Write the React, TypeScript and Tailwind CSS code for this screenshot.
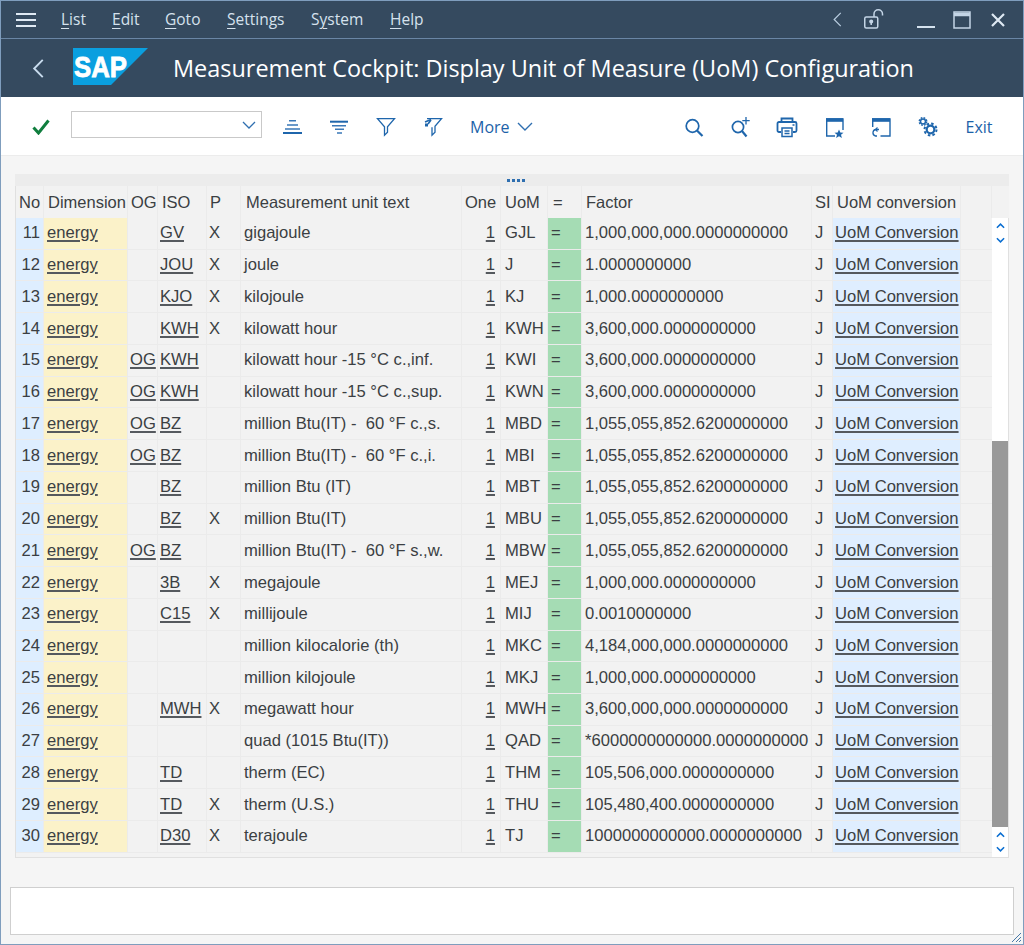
import React from "react";

const rows = [
  { no: 11, og: "", iso: "GV", p: "X", text: "gigajoule", uom: "GJL", factor: "1,000,000,000.0000000000" },
  { no: 12, og: "", iso: "JOU", p: "X", text: "joule", uom: "J", factor: "1.0000000000" },
  { no: 13, og: "", iso: "KJO", p: "X", text: "kilojoule", uom: "KJ", factor: "1,000.0000000000" },
  { no: 14, og: "", iso: "KWH", p: "X", text: "kilowatt hour", uom: "KWH", factor: "3,600,000.0000000000" },
  { no: 15, og: "OG", iso: "KWH", p: "", text: "kilowatt hour -15 °C c.,inf.", uom: "KWI", factor: "3,600,000.0000000000" },
  { no: 16, og: "OG", iso: "KWH", p: "", text: "kilowatt hour -15 °C c.,sup.", uom: "KWN", factor: "3,600,000.0000000000" },
  { no: 17, og: "OG", iso: "BZ", p: "", text: "million Btu(IT) -  60 °F c.,s.", uom: "MBD", factor: "1,055,055,852.6200000000" },
  { no: 18, og: "OG", iso: "BZ", p: "", text: "million Btu(IT) -  60 °F c.,i.", uom: "MBI", factor: "1,055,055,852.6200000000" },
  { no: 19, og: "", iso: "BZ", p: "", text: "million Btu (IT)", uom: "MBT", factor: "1,055,055,852.6200000000" },
  { no: 20, og: "", iso: "BZ", p: "X", text: "million Btu(IT)", uom: "MBU", factor: "1,055,055,852.6200000000" },
  { no: 21, og: "OG", iso: "BZ", p: "", text: "million Btu(IT) -  60 °F s.,w.", uom: "MBW", factor: "1,055,055,852.6200000000" },
  { no: 22, og: "", iso: "3B", p: "X", text: "megajoule", uom: "MEJ", factor: "1,000,000.0000000000" },
  { no: 23, og: "", iso: "C15", p: "X", text: "millijoule", uom: "MIJ", factor: "0.0010000000" },
  { no: 24, og: "", iso: "", p: "", text: "million kilocalorie (th)", uom: "MKC", factor: "4,184,000,000.0000000000" },
  { no: 25, og: "", iso: "", p: "", text: "million kilojoule", uom: "MKJ", factor: "1,000,000.0000000000" },
  { no: 26, og: "", iso: "MWH", p: "X", text: "megawatt hour", uom: "MWH", factor: "3,600,000,000.0000000000" },
  { no: 27, og: "", iso: "", p: "", text: "quad (1015 Btu(IT))", uom: "QAD", factor: "*6000000000000.0000000000" },
  { no: 28, og: "", iso: "TD", p: "", text: "therm (EC)", uom: "THM", factor: "105,506,000.0000000000" },
  { no: 29, og: "", iso: "TD", p: "X", text: "therm (U.S.)", uom: "THU", factor: "105,480,400.0000000000" },
  { no: 30, og: "", iso: "D30", p: "X", text: "terajoule", uom: "TJ", factor: "1000000000000.0000000000" },
];

const headers = [
  { label: "No", cls: "pl-[3px]" },
  { label: "Dimension", cls: "pl-[4px]" },
  { label: "OG", cls: "pl-[3px]" },
  { label: "ISO", cls: "pl-[4px]" },
  { label: "P", cls: "pl-[3px]" },
  { label: "Measurement unit text", cls: "pl-[5px]" },
  { label: "One", cls: "pl-[3px]" },
  { label: "UoM", cls: "pl-[4px]" },
  { label: "=", cls: "pl-[5px]" },
  { label: "Factor", cls: "pl-[4px]" },
  { label: "SI", cls: "pl-[3px]" },
  { label: "UoM conversion", cls: "pl-[4px]" },
  { label: "", cls: "" },
];

const colsClass = "grid grid-cols-[28px_84px_30px_49px_34px_221px_39px_47px_34px_230px_21px_128px_31px]";
const cell = "flex items-center overflow-hidden whitespace-nowrap border-r border-[#ebebeb]";
const rowCell = cell + " pt-[1px]";
const link = "underline decoration-[#55595e] decoration-[1.5px] underline-offset-[2px]";

function Icon({ children }: { children: React.ReactNode }) {
  return (
    <svg viewBox="0 0 22 22" fill="none" stroke="#1f66ac" strokeWidth="1.5" className="h-[22px] w-[22px] shrink-0">
      {children}
    </svg>
  );
}

function MenuItem({ before = "", mark, after }: { before?: string; mark: string; after: string }) {
  return (
    <span>
      {before}
      <span className="underline decoration-[1px] underline-offset-[3px]">{mark}</span>
      {after}
    </span>
  );
}

function ScrollButtons() {
  return (
    <div className="flex h-[30px] shrink-0 flex-col items-center justify-center gap-[8px] bg-white">
      <svg viewBox="0 0 10 6" className="h-[6px] w-[9px]" fill="none" stroke="#0a6ed1" strokeWidth="1.7">
        <path d="M1 5l4-4 4 4" />
      </svg>
      <svg viewBox="0 0 10 6" className="h-[6px] w-[9px]" fill="none" stroke="#0a6ed1" strokeWidth="1.7">
        <path d="M1 1l4 4 4-4" />
      </svg>
    </div>
  );
}

export default function App() {
  return (
    <div className="flex h-[945px] w-[1024px] flex-col overflow-hidden border border-[#7f9dbd] bg-[#f5f5f5] font-['Liberation_Sans',sans-serif] text-[16.6px] text-[#3b3f43]">
      {/* Menu bar */}
      <div className="flex h-[38px] shrink-0 items-center border-b border-[#6a86a5] bg-[#354a5f] font-['Open_Sans',sans-serif] text-[#d5e2ee]">
        <svg viewBox="0 0 20 16" className="ml-[15px] h-[16px] w-[20px]" fill="none" stroke="#dfe9f3" strokeWidth="2">
          <path d="M0 2h20M0 8h20M0 14h20" />
        </svg>
        <div className="ml-[25px] flex text-[15.5px]">
          <div className="w-[51px]"><MenuItem mark="L" after="ist" /></div>
          <div className="w-[53px]"><MenuItem mark="E" after="dit" /></div>
          <div className="w-[62px]"><MenuItem mark="G" after="oto" /></div>
          <div className="w-[84px]"><MenuItem mark="S" after="ettings" /></div>
          <div className="w-[79px]"><MenuItem before="S" mark="y" after="stem" /></div>
          <div><MenuItem mark="H" after="elp" /></div>
        </div>
        <div className="ml-auto flex items-center">
          <svg viewBox="0 0 10 16" className="h-[15px] w-[10px]" fill="none" stroke="#b9cde0" strokeWidth="1.3">
            <path d="M9 1L2 8l7 7" />
          </svg>
          <svg viewBox="0 0 22 22" className="ml-[22px] h-[22px] w-[22px]" fill="none" stroke="#c4d5e6" strokeWidth="1.5">
            <rect x="0.75" y="8" width="13" height="11" rx="1.5" />
            <path d="M10 8V5a4.2 4.2 0 0 1 8.5 0v1.5" />
            <circle cx="7.2" cy="12.5" r="1.3" fill="#c4d5e6" />
            <path d="M7.2 13v3" />
          </svg>
          <svg viewBox="0 0 20 20" className="ml-[30px] h-[20px] w-[20px]" fill="none" stroke="#d5e2ee" strokeWidth="2">
            <path d="M1 17h18" />
          </svg>
          <svg viewBox="0 0 18 18" className="ml-[17px] h-[18px] w-[18px]" fill="none" stroke="#c4d5e6" strokeWidth="1.5">
            <rect x="1" y="1" width="16" height="16" />
            <path d="M1 3.5h16" strokeWidth="3.5" />
          </svg>
          <svg viewBox="0 0 14 14" className="ml-[20px] mr-[18px] h-[14px] w-[14px]" fill="none" stroke="#dfe9f3" strokeWidth="2.2">
            <path d="M1 1l12 12M13 1L1 13" />
          </svg>
        </div>
      </div>

      {/* Title bar */}
      <div className="flex h-[58px] shrink-0 items-center bg-[#354a5f]">
        <svg viewBox="0 0 12 20" className="ml-[31px] h-[19px] w-[12px]" fill="none" stroke="#c9dcee" strokeWidth="2">
          <path d="M11 1L2 10l9 9" />
        </svg>
        <svg viewBox="0 0 75 37" className="mb-[3px] ml-[29px] h-[37px] w-[75px]">
          <polygon points="0,0 75,0 38,37 0,37" fill="#0a9fdf" />
          <text x="1" y="29" fill="#fff" stroke="#fff" strokeWidth="0.8" fontFamily="Liberation Sans" fontWeight="700" fontSize="29" textLength="53" lengthAdjust="spacingAndGlyphs">
            SAP
          </text>
        </svg>
        <div className="ml-[25px] whitespace-nowrap pt-[2px] font-['Open_Sans',sans-serif] text-[23.45px] text-white">
          Measurement Cockpit: Display Unit of Measure (UoM) Configuration
        </div>
      </div>

      {/* Toolbar */}
      <div className="flex h-[59px] shrink-0 items-center border-b border-[#ececec] bg-white pt-[1px] font-['Open_Sans',sans-serif] text-[16px] text-[#1c62a8]">
        <svg viewBox="0 0 18 16" className="ml-[31px] h-[16px] w-[18px]" fill="none" stroke="#107e3e" strokeWidth="3">
          <path d="M1.5 8.5l5 5.5L16.5 1.5" />
        </svg>
        <div className="mb-[4px] ml-[21px] flex h-[27px] w-[191px] items-center justify-end border border-[#c9c9c9] pr-[5px]">
          <svg viewBox="0 0 14 8" className="h-[8px] w-[14px]" fill="none" stroke="#2f6fb0" strokeWidth="1.3">
            <path d="M1 1l6 6 6-6" />
          </svg>
        </div>
        <div className="ml-[19px] flex items-center gap-[25px]">
          <Icon>
            <path d="M8 4.7h7M6 9h11M4 13h15" stroke="#3a78b8" />
            <path d="M2 17h19" strokeWidth="2" />
          </Icon>
          <Icon>
            <path d="M2 5.7h18" strokeWidth="2" />
            <path d="M4 9.7h14M7 13.2h9M9 17h5" stroke="#3a78b8" />
          </Icon>
          <Icon>
            <path d="M2.5 2.7h17l-7 8v5.5l-3 3v-8.5z" strokeWidth="1.3" />
          </Icon>
          <Icon>
            <path d="M5 2.7h14.5l-6.5 7.5v6l-3 3v-8" strokeWidth="1.3" />
            <path d="M3 6l6-2.5M6 8l3-4" strokeWidth="1.6" />
            <rect x="3" y="7.5" width="3" height="3" fill="#1f66ac" stroke="none" />
          </Icon>
        </div>
        <span className="ml-[26px]">More</span>
        <svg viewBox="0 0 16 9" className="ml-[7px] h-[9px] w-[16px]" fill="none" stroke="#2f6fb0" strokeWidth="1.4">
          <path d="M1 1l7 7 7-7" />
        </svg>
        <div className="ml-[149px] flex items-center gap-[25px]">
          <Icon>
            <circle cx="10.5" cy="10" r="6.3" strokeWidth="1.7" />
            <path d="M15 14.5l5.5 5.5" strokeWidth="2.2" />
          </Icon>
          <Icon>
            <circle cx="9" cy="11" r="5.6" strokeWidth="1.7" />
            <path d="M13 15l4.5 5.5" strokeWidth="2.2" />
            <path d="M17 1v7.4M13.3 4.7h7.4" strokeWidth="1.3" />
          </Icon>
          <Icon>
            <path d="M5.5 6V2.5h11V6" strokeWidth="1.8" />
            <path d="M5 16H3a1.5 1.5 0 0 1-1.5-1.5v-7A1.5 1.5 0 0 1 3 6h16a1.5 1.5 0 0 1 1.5 1.5v7A1.5 1.5 0 0 1 19 16h-2" strokeWidth="1.8" />
            <path d="M6 12h10v8.5H6zM8.5 15h5M8.5 17.5h5M16.5 9h2" strokeWidth="1.5" />
          </Icon>
          <Icon>
            <path d="M12 20H3.7V3H20v11" strokeWidth="1.4" />
            <path d="M3 4h17" strokeWidth="3.6" />
            <polygon points="16,13.5 17.3,16.5 20.5,16.8 18,18.8 18.9,22 16,20.2 13.1,22 14,18.8 11.5,16.8 14.7,16.5" fill="#1f66ac" stroke="none" />
          </Icon>
          <Icon>
            <path d="M2.7 11V3H20v17h-9.5" strokeWidth="1.4" />
            <path d="M2 4h18" strokeWidth="3.6" />
            <path d="M9 13.5H6a3.3 3.3 0 0 0-.5 6.5H7" strokeWidth="1.3" />
            <path d="M7.5 11.5l-2 2 2 2" strokeWidth="1.2" />
          </Icon>
          <Icon>
            <circle cx="6" cy="5.5" r="2.5" strokeWidth="1.5" />
            <circle cx="6" cy="5.5" r="3.8" strokeWidth="1.3" strokeDasharray="1.8 1.2" />
            <circle cx="13.5" cy="13.5" r="3.8" strokeWidth="2.2" />
            <circle cx="13.5" cy="13.5" r="6" strokeWidth="2" strokeDasharray="2.5 2.2" />
          </Icon>
        </div>
        <span className="ml-[27px]">Exit</span>
      </div>

      {/* Table area */}
      <div className="flex-1 px-[14px] pt-[18px]">
        <div className="flex h-[12px] items-center justify-center bg-[#ececec] pl-[7px]">
          <span className="h-[3px] w-[18px] bg-[repeating-linear-gradient(90deg,#2f6fb0_0,#2f6fb0_3px,transparent_3px,transparent_5px)]" />
        </div>
        <div className={colsClass + " h-[32px] border-l border-[#e0e0e0] bg-[#f2f2f2] pr-[17px] text-[16.5px]"}>
          {headers.map((h, i) => (
            <div key={i} className={cell + " " + h.cls}>{h.label}</div>
          ))}
        </div>
        <div className="flex h-[640px] border-x border-b border-[#e0e0e0] bg-[#f2f2f2]">
          <div className="flex-1">
            {rows.map((r) => (
              <div key={r.no} className={colsClass + " h-[31.74px] border-b border-[#ebebeb]"}>
                <div className={rowCell + " justify-end bg-[#deeeff] pr-[3px]"}>{r.no}</div>
                <div className={rowCell + " bg-[#fbf2c9] pl-[3px]"}><span className={link}>energy</span></div>
                <div className={rowCell + " pl-[2px]"}><span className={link}>{r.og}</span></div>
                <div className={rowCell + " pl-[2px]"}><span className={link}>{r.iso}</span></div>
                <div className={rowCell + " pl-[2px]"}>{r.p}</div>
                <div className={rowCell + " pl-[3px]"}><span className="whitespace-pre">{r.text}</span></div>
                <div className={rowCell + " justify-end pr-[5px]"}><span className={link}>1</span></div>
                <div className={rowCell + " pl-[4px]"}>{r.uom}</div>
                <div className={rowCell + " bg-[#a5dcb4] pl-[3px]"}>=</div>
                <div className={rowCell + " pl-[3px]"}>{r.factor}</div>
                <div className={rowCell + " pl-[3px]"}>J</div>
                <div className={rowCell + " bg-[#dfeeff] pl-[2px]"}><span className={link}>UoM Conversion</span></div>
                <div />
              </div>
            ))}
          </div>
          {/* Scrollbar */}
          <div className="flex w-[16px] shrink-0 flex-col bg-white">
            <ScrollButtons />
            <div className="flex flex-1 flex-col justify-end">
              <div className="h-[386px] bg-[#999999]" />
            </div>
            <ScrollButtons />
          </div>
        </div>

        {/* Message field */}
        <div className="relative -mx-[5px] mt-[29px] h-[48px] border border-[#cfcfcf] bg-white">
          <svg viewBox="0 0 9 9" className="absolute bottom-[-8px] right-[-8px] h-[9px] w-[9px]" fill="none" stroke="#4a7aa8" strokeWidth="1">
            <path d="M0 9l9-9M4 9l5-5M7 9l2-2" />
          </svg>
        </div>
      </div>
    </div>
  );
}
